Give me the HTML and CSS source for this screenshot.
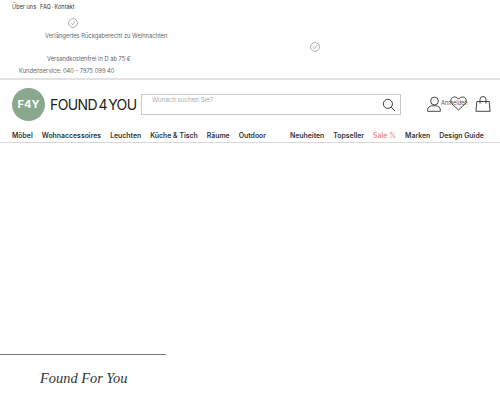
FILE: index.html
```html
<!DOCTYPE html>
<html lang="de">
<head>
<meta charset="utf-8">
<title>Found 4 You</title>
<link rel="stylesheet" href="styles.css">
</head>
<body>
<section class="topbar">
  <div class="links"><span>Über uns</span><span class="faq">FAQ</span><span class="dot">·</span><span>Kontakt</span></div>
  <svg class="check check-a" viewBox="0 0 12 12"><circle cx="6" cy="6" r="5.3"/><path d="M3.6 6.2 5.3 7.9 8.6 4"/></svg>
  <div class="usp usp-a">Verlängertes Rückgaberecht zu Weihnachten</div>
  <svg class="check check-b" viewBox="0 0 12 12"><circle cx="6" cy="6" r="5.3"/><path d="M3.6 6.2 5.3 7.9 8.6 4"/></svg>
  <div class="usp usp-b">Versandkostenfrei in D ab 75 €</div>
  <div class="usp usp-c">Kundenservice: 040 - 7975 099 40</div>
</section>
<header class="head">
  <div class="logo-circle">F4Y</div>
  <div class="wordmark">FOUND 4 YOU</div>
  <div class="search">
    <span class="placeholder">Wonach suchen Sie?</span>
    <svg class="mag" viewBox="0 0 16 16"><circle cx="6.7" cy="6.7" r="5.2"/><path d="M10.5 10.5 15 15"/></svg>
  </div>
  <div class="tools">
    <svg class="user" viewBox="0 0 15 16"><circle cx="7.5" cy="5" r="3.9"/><path d="M.7 15.3v-1.5c0-2.3 2-4 4.2-4h4.2c2.200 0 4.200 1.700 4.200 4v1.500z"/></svg>
    <span class="login">Anmelden</span>
    <svg class="heart" viewBox="0 0 17 15"><path d="M8.500 14 1.900 7.800C-.1 5.800.6 2 3.300 1.200c2-.6 4 .2 5.200 2 1.200-1.800 3.200-2.600 5.200-2 2.700.8 3.400 4.600 1.400 6.600z"/></svg>
    <svg class="bag" viewBox="0 0 16 16"><path d="M1.800 5.500h12.400l.9 9.800H.9z"/><path d="M5 7.500V3.500a3 3 0 0 1 6 0v4"/></svg>
  </div>
</header>
<nav class="nav">
  <a>Möbel</a><a>Wohnaccessoires</a><a>Leuchten</a><a>Küche &amp; Tisch</a><a>Räume</a><a>Outdoor</a>
  <a class="push">Neuheiten</a><a>Topseller</a><a class="sale">Sale %</a><a>Marken</a><a>Design Guide</a>
</nav>
<main class="content"></main>
<footer class="foot">
  <div class="claim">Found For You</div>
</footer>
</body>
</html>
```
FILE: styles.css
```css
* { box-sizing: border-box; }
html, body { margin: 0; height: 400px; overflow: hidden; background: #fff; }
body { font-family: "Inter", "Open Sans", sans-serif; color: #222; }

.topbar { height: 80px; border-bottom: 2px solid #e2e2e2; padding-top: 4px; }
.links { display: flex; margin-left: 12px; height: 7px; font-size: 5.6px; line-height: 7px; color: #333; }
.faq { margin-left: 4px; }
.dot { margin: 0 1px; }

.check { display: block; width: 10px; height: 10px; fill: none; stroke: #8a8a8a; stroke-width: .8; }
.check-a { margin: 7px 0 0 68px; }
.check-b { margin: 2px 0 0 310px; }

.usp { font-size: 5.75px; line-height: 8px; color: #666; white-space: nowrap; }
.usp-a { margin: 4px 0 0 45px; }
.usp-b { margin: 3px 0 0 47px; }
.usp-c { margin: 4px 0 0 19px; }

.head { display: flex; align-items: center; height: 44px; padding: 5px 0 0 12px; }
.logo-circle { width: 33px; height: 33px; border-radius: 50%; background: #8aa88d; color: #fff; font: 700 11px/33px "Inter", sans-serif; text-align: center; flex: none; }
.wordmark { width: 91px; margin-left: 5px; font: 400 14px/16px "Inter", sans-serif; letter-spacing: -.6px; word-spacing: -2px; color: #222; white-space: nowrap; flex: none; }
.search { position: relative; width: 260px; height: 21px; margin-top: -1px; border: 1px solid #c8c8c8; flex: none; }
.placeholder { position: absolute; left: 10px; top: 1px; font-size: 6.2px; line-height: 7px; color: #aaa; }
.mag { position: absolute; right: 4px; top: 3px; width: 14px; height: 14px; fill: none; stroke: #333; stroke-width: 1.100; }

.tools { position: relative; display: flex; align-items: center; margin-left: 26px; margin-top: -2px; }
.user { width: 15px; height: 16px; fill: none; stroke: #333; stroke-width: .9; }
.login { position: absolute; left: 14px; top: 4px; font-size: 5.6px; line-height: 7px; color: #555; }
.heart { width: 17px; height: 15px; margin-left: 8px; fill: none; stroke: #333; stroke-width: .9; }
.bag { width: 16px; height: 16px; margin-left: 8px; fill: none; stroke: #333; stroke-width: .9; }

.nav { display: flex; gap: 9px; height: 19px; padding: 7px 0 0 12px; border-bottom: 1px solid #d8d8d8; font-size: 6.9px; font-weight: 600; line-height: 10px; color: #333; white-space: nowrap; }
.push { margin-left: 15px; }
.sale { color: #f08d80; }

.content { height: 211px; }
.foot { width: 166px; height: 46px; border-top: 1px solid #777; padding: 14px 0 0 40px; }
.claim { font: italic 400 14.4px/18px "Liberation Serif", serif; color: #333; white-space: nowrap; }
```
